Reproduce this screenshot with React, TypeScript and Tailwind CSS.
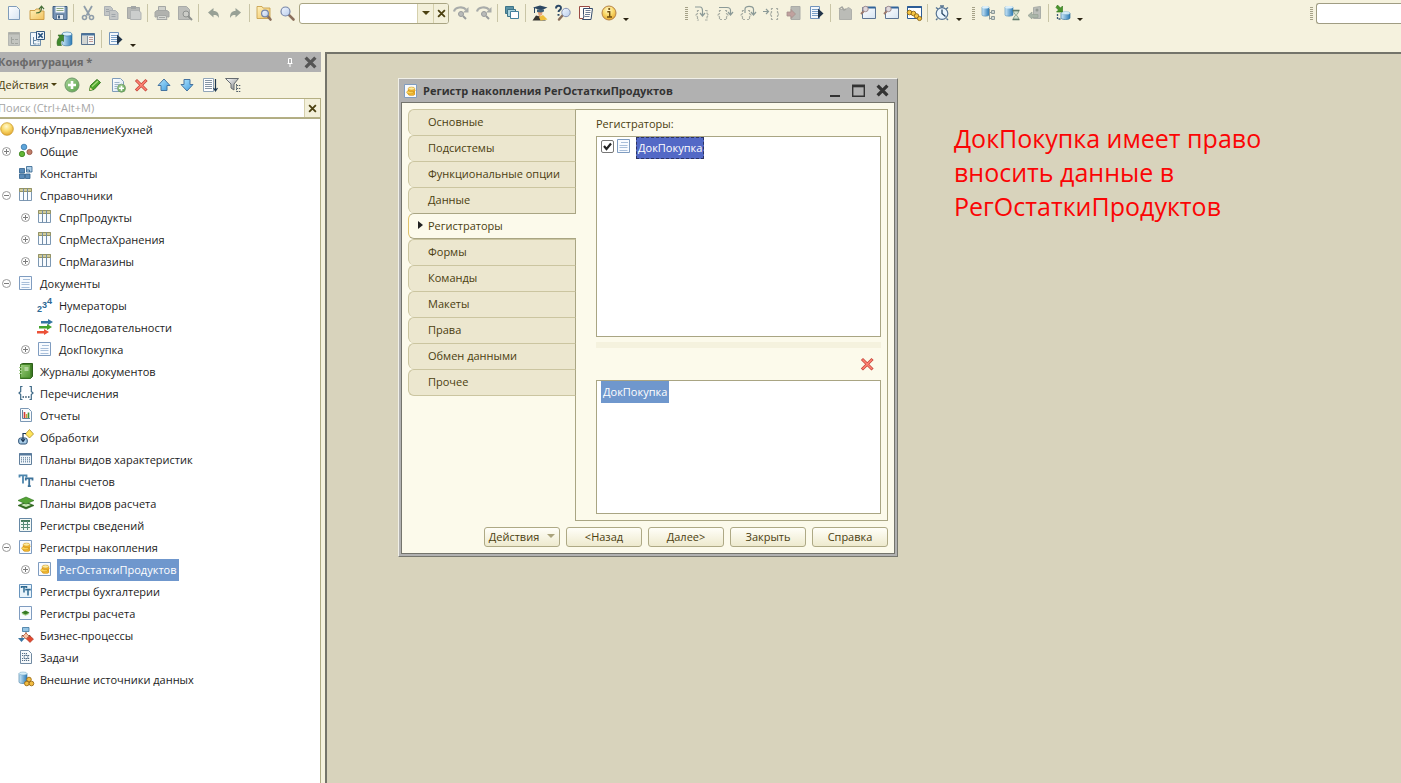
import React from 'react';

type IconName = keyof typeof icons;

const page = (
  <path d="M2.5 1.5h8l3 3v10h-11z" fill="url(#gPaper)" stroke="#7f9cba" />
);
const sheet = <path d="M1.5 1.5h12v13h-12z" fill="#f8fbff" stroke="#7f9cc0" />;
const dots = (x: number, y: number, n: number) =>
  Array.from({ length: n }, (_, i) => <path key={i} d={`M${x + i * 2 + 0.5} ${y}v6`} stroke="#7d96ae" strokeDasharray="1.500 .5" />);

const cylinder = (
  <g stroke="#2f6f9f" strokeWidth=".6">
    <path d="M5 3v10c0 2.400 10 2.400 10 0V3z" fill="url(#gBlue)" />
    <ellipse cx="10" cy="3" rx="5" ry="2" fill="#d8effb" />
  </g>
);

const lens = (x = 6.5, y = 6.5, r = 4.5) => (
  <g>
    <path d={`M${x + r * 0.7} ${y + r * 0.7}L14.5 14.5`} stroke="#8b6f5c" strokeWidth="2.6" strokeLinecap="round" />
    <circle cx={x} cy={y} r={r} fill="url(#gLens)" stroke="#7685a8" strokeWidth="1.2" />
  </g>
);

const coins = (
  <g stroke="#b98218" strokeWidth=".4">
    <path d="M4.500 9v1.800c1 1.600 6.500 1.600 7.500 0V5.500c-1-1.600-6-1.600-7 0z" fill="#e9a71f" strokeWidth="0" />
    <ellipse cx="8.500" cy="11" rx="3.500" ry="1.500" fill="#f3b62c" />
    <ellipse cx="7" cy="9.300" rx="3.500" ry="1.500" fill="#fdd65a" />
    <ellipse cx="9" cy="7.300" rx="3.300" ry="1.500" fill="#f3b62c" />
    <ellipse cx="8.500" cy="5.500" rx="3.300" ry="1.500" fill="#ffeb9a" />
  </g>
);

const tt = (
  <g fill="none" strokeWidth="1.8">
    <path d="M1.5 4.500V2.400h7V4.500M5 2.400V10.500" stroke="#4d86ad" />
    <path d="M7.800 7.500V5.400h6.700V7.500M11.200 5.400V13.500M9.800 13.200h3" stroke="#3d7299" />
  </g>
);

const windowFrame = (
  <g>
    <path d="M2.500 2.500h13v11h-13z" fill="url(#gPaper)" stroke="#5d7594" />
    <path d="M4 2.500h11.500" stroke="#31649b" strokeWidth="2" />
  </g>
);

const icons = {
  newFile: page,
  open: (
    <g>
      <path d="M1 5.500h5l1-1.500h4v2h4v8.500H1z" fill="url(#gFolder)" stroke="#c9973f" strokeWidth=".9" />
      <path d="M7 8c4.500 0 5.500-1.500 5.500-6M10 4.200l2.500-3 2.500 3" fill="none" stroke="#47703a" strokeWidth="1.200" />
    </g>
  ),
  save: (
    <g>
      <path d="M1 1.500h14v13H2.500L1 13z" fill="#7794b5" stroke="#3f5e80" />
      <path d="M3.500 1.500h9v6h-9z" fill="#f5f8fa" />
      <path d="M4.500 3.500h7M4.500 5.500h7" stroke="#8dab80" />
      <path d="M4.500 9.500h7v5h-7z" fill="#dfe7ef" stroke="#48637f" strokeWidth=".7" />
      <path d="M6 10.500h2v3H6z" fill="#3f5e80" />
    </g>
  ),
  cut: (
    <g fill="none" stroke="#8f9da9">
      <path d="M4 1l5.500 9.500M12 1L6.500 10.500" strokeWidth="1.800" />
      <circle cx="4.500" cy="12.500" r="2" strokeWidth="1.600" />
      <circle cx="11.500" cy="12.500" r="2" strokeWidth="1.600" />
    </g>
  ),
  copy: (
    <g fill="#c3c6c6" stroke="#acb1b4">
      <path d="M1.500 1.500h6l2 2v7h-8z" />
      <path d="M6.500 5.500h6l2.500 2.500v6.500H6.500z" />
      <path d="M3 4.500h3M3 6.500h3M8.500 9.500h4M8.500 11.500h4" stroke="#9fa5aa" />
    </g>
  ),
  paste: (
    <g>
      <path d="M1.500 2.500h12v11h-12z" fill="#b7b8b5" stroke="#a6a8a6" />
      <path d="M5 1h5v3H5z" fill="#a2a5a5" />
      <path d="M4.500 5.500h8l2.500 2v7H4.500z" fill="#cccecd" stroke="#b0b3b3" />
    </g>
  ),
  print: (
    <g stroke="#a5a7a4">
      <path d="M4.500 1.500h7v5h-7z" fill="#d0d1cc" />
      <path d="M1 7l2-1.500h10L15 7v5H1z" fill="#b1b2ae" />
      <path d="M4 10.500h8l1 4H3z" fill="#d6d7d2" />
      <path d="M5 12.500h6" />
    </g>
  ),
  preview: (
    <g>
      <path d="M1.500 1.500h8l3 3v10h-11z" fill="#bdbeba" stroke="#a9aba8" />
      <circle cx="9" cy="9" r="3" fill="#cccdc8" stroke="#8f928f" />
      <path d="M11 11l4 4" stroke="#8f928f" strokeWidth="2" />
    </g>
  ),
  undo: <path d="M3 7.500L8.500 3v3c4 0 5.500 2.500 5.500 7-1.500-2.500-2.500-3-5.500-3v2.500z" fill="#98a196" />,
  redo: <path d="M13 7.500L7.500 3v3C3.500 6 2 8.500 2 13c1.500-2.500 2.500-3 5.500-3v2.500z" fill="#98a196" />,
  findFolder: (
    <g>
      <path d="M1 1.500h5l1 1.500h7v10.500H1z" fill="url(#gFolder)" stroke="#c9a24f" strokeWidth=".9" />
      {lens(9, 8.5, 3.4)}
    </g>
  ),
  find: lens(),
  findNext: (
    <g>
      <path d="M1 6.500c1-4.500 9-5.500 12-2" fill="none" stroke="#a9acaa" strokeWidth="2.200" />
      <path d="M10 7.500L15.500 7.500V2z" fill="#a9acaa" />
      <circle cx="8" cy="9" r="2.500" fill="#b9bbb9" stroke="#999c9c" />
      <path d="M10 11l3 3" stroke="#999c9c" strokeWidth="2" />
    </g>
  ),
  windows: (
    <g>
      <path d="M1.500 1.500h8v7h-8z" fill="#5b93a5" stroke="#3d7488" />
      <path d="M3.500 4.500h8v7h-8z" fill="#a9d3dd" stroke="#3d7488" />
      <path d="M6.500 6.500h8v7h-8z" fill="#fff" stroke="#43809b" />
    </g>
  ),
  scholar: (
    <g>
      <path d="M.5 15.500l3.500-5 4 1 6 4z" fill="#36342f" />
      <path d="M7 12l4-2 4.500 4.500-7 1z" fill="#f0bf3a" />
      <path d="M5 5h6l-1 5-3 1.500z" fill="#e8a77c" />
      <path d="M1 2.500L8 .5l7.500 2-6.500 3z" fill="#2c4762" />
      <path d="M5 4.500v2.500l4 .5 3-1V4.500" fill="#3e6079" />
      <path d="M2.500 3v5" stroke="#2c4762" />
    </g>
  ),
  helpFind: (
    <g>
      <path d="M7.500 10.500L4 14.500" stroke="#8b6f5c" strokeWidth="2.500" strokeLinecap="round" />
      <circle cx="11" cy="7.500" r="4.200" fill="url(#gLens)" stroke="#8794b5" />
      <path d="M1 3.500c0-3.500 5-3.500 5-.5 0 2-2.500 2-2.500 4M3.500 9v1.700" fill="none" stroke="#2b4865" strokeWidth="1.900" />
    </g>
  ),
  syntax: (
    <g fill="#fffdf8">
      <path d="M1.500 1.500h10v12h-10z" stroke="#9a4a42" />
      <path d="M5.500 3.500h9l-1.500 11H4.500c1.500-2 1.500-3 1-5z" stroke="#354d6d" />
      <path d="M7.500 5.500h5M7.500 7.500h5M7 9.500h5M6.500 11.500h5" stroke="#6d7f98" />
    </g>
  ),
  info: (
    <g>
      <circle cx="8" cy="8" r="7" fill="url(#gGold)" stroke="#b58348" />
      <path d="M6.300 6.800h2.400v5M6 12h5" stroke="#6f4c0e" strokeWidth="1.400" fill="none" />
      <circle cx="8.200" cy="4" r="1.100" fill="#6f4c0e" />
    </g>
  ),
  stepInto: (
    <g fill="none" stroke="#a9aea4" strokeWidth="1.200">
      <path d="M5 5.500H3.500v3l-1.500 1.500 1.500 2v3H5M11 5.500h2v3l1.500 1.500-1.500 2v3h-2" strokeDasharray="3 1" />
      <path d="M1 2h5c2 0 2.500 1.500 2.500 4v4M6 8l2.500 3L11 8" stroke="#8b9a97" />
    </g>
  ),
  stepOver: (
    <g fill="none" stroke="#a9aea4" strokeWidth="1.200">
      <path d="M4 5.500H2.500v3l-1.500 1.500 1.500 2v2.500H5M8 5.500h1.500v3L11 10l-1.500 2v2.500H7" strokeDasharray="3 1" />
      <path d="M2 2.500h8c2.500 0 3.500 1 3.500 3v4M11 7l2.500 3 2.500-3" stroke="#8b9a97" />
    </g>
  ),
  stepOut: (
    <g fill="none" stroke="#a9aea4" strokeWidth="1.200">
      <path d="M4 5.500H2.500v3L1 10l1.500 2v2.500H5M8 5.500h1.500v3L11 10l-1.500 2v2.500H7" strokeDasharray="3 1" />
      <path d="M5 8V4c0-3.500 8-3.500 8.500 0v5M11 7l2.500 3 2.500-3" stroke="#8b9a97" />
    </g>
  ),
  runTo: (
    <g fill="none" stroke="#a9aea4" strokeWidth="1.200">
      <path d="M10 3.500H8.500v4L7 9l1.500 2v3.500H10M13 3.500h1.500v4L16 9l-1.500 2v3.500H13" strokeDasharray="3 1" />
      <path d="M0 6.500h5M3 4l2.500 2.500L3 9" stroke="#8b9a97" />
    </g>
  ),
  breakpoint: (
    <g>
      <path d="M5 1.500h9v13H5z" fill="#b9bab5" stroke="#abaca8" />
      <path d="M1 7h4V4.500L9.500 9 5 13.500V11H1z" fill="#c0a19e" stroke="#a5908d" strokeWidth=".8" />
    </g>
  ),
  docRun: (
    <g>
      <path d="M1.500 1.500h9v12h-9z" fill="#f4f8fc" stroke="#7193bb" />
      <path d="M3 4.500h6M3 6.500h6M3 8.500h6M3 10.500h6" stroke="#7ba0c7" />
      <path d="M9 3.500l5.500 5L9 13.500z" fill="#22354a" />
    </g>
  ),
  greyDoc: (
    <g>
      <path d="M2.500 4.500h6l3-2 3 2v10h-12z" fill="#bbbcb7" stroke="#afb0ab" />
      <path d="M2 4l3-2 2 3 2-1" stroke="#a4a5a0" strokeWidth="1.500" fill="none" />
    </g>
  ),
  windowFind: (
    <g>
      {windowFrame}
      <path d="M1 9l3-3" stroke="#9b796c" strokeWidth="2" />
      <circle cx="5.500" cy="4" r="2.700" fill="#dfd9dc" stroke="#a28e93" />
    </g>
  ),
  windowChain: (
    <g>
      <path d="M1.500 1.500h14v12h-14z" fill="#fff" stroke="#2d5d96" />
      <path d="M1.500 2h14" stroke="#2d5d96" strokeWidth="2" />
      <g fill="#f6c541" stroke="#8c6516" strokeWidth=".9">
        <circle cx="3.500" cy="7.500" r="2.300" />
        <circle cx="7.500" cy="8.500" r="2.300" />
        <circle cx="10.500" cy="11" r="2.300" />
        <circle cx="13.500" cy="13.500" r="2.100" />
      </g>
    </g>
  ),
  stopwatch: (
    <g fill="none" stroke="#567493">
      <path d="M6 1h4M8 1v2M2 2.500l2 1.500M14 2.500L12 4M3.500 13.500L2 15M12.500 13.500L14 15" strokeWidth="1.400" />
      <circle cx="8" cy="8.500" r="5.800" fill="#eaf5fd" strokeWidth="1.200" />
      <path d="M8 4.500v4l3.500 3" stroke="#294866" strokeWidth="1.300" />
    </g>
  ),
  dbTree: (
    <g>
      <path d="M1 2v8c0 1.500 7 1.500 7 0V2z" fill="url(#gBlue)" stroke="#4a8ab5" strokeWidth=".6" />
      <ellipse cx="4.500" cy="2.300" rx="3.500" ry="1.300" fill="#def1fb" />
      <path d="M8.500 4v10.500M8.500 7.500h3M8.500 13.500h3" stroke="#8c9998" fill="none" />
      <path d="M10.500 5.500h3v3h-3zM10.500 11.500h3v3h-3z" fill="#ced6d2" stroke="#8c9998" />
    </g>
  ),
  dbWait: (
    <g>
      <path d="M1 2v8c0 1.500 8 1.500 8 0V2z" fill="url(#gBlue)" stroke="#4a8ab5" strokeWidth=".6" />
      <ellipse cx="5" cy="2.300" rx="4" ry="1.300" fill="#def1fb" />
      <path d="M8.500 5.500h7M8.500 14.500h7" stroke="#567465" strokeWidth="1.500" />
      <path d="M9.500 6h5c0 3-2 3-2 4s2 1.500 2 4h-5c0-2.500 2-3 2-4s-2-1-2-4z" fill="#cfe0cc" stroke="#6f8c78" strokeWidth=".8" />
    </g>
  ),
  dbGrey: (
    <g>
      <path d="M6.500 2.500l7-1v12h-7z" fill="#bbbeb9" stroke="#a9ada8" />
      <path d="M1 10.500L5 7v2.500h6v3H5V14z" fill="#a9b5a8" stroke="#96a295" strokeWidth=".7" />
      <circle cx="10" cy="5" r="1.500" fill="#949b94" />
    </g>
  ),
  dbImport: (
    <g>
      <path d="M6 8v5c0 2 9 2 9 0V8z" fill="url(#gBlue)" stroke="#37729c" strokeWidth=".7" />
      <ellipse cx="10.500" cy="8" rx="4.500" ry="1.500" fill="#d5edf8" stroke="#6ea2c1" strokeWidth=".4" />
      <path d="M2.500 0l3 3 2-2v6H1.500l2-2L1 2.500z" fill="#49952d" stroke="#2d701a" strokeWidth=".6" />
      <path d="M2.500 9v5h3" stroke="#3c5a76" fill="none" strokeWidth="1.300" strokeDasharray="2 1" />
    </g>
  ),
  greyConfig: (
    <g>
      <path d="M2.500 1.500h11v13h-11z" fill="#c3c5c0" stroke="#b5b7b2" />
      <path d="M2.500 2.500h11" stroke="#aaaca7" strokeWidth="2" />
      <path d="M5.500 6v6.500h2.500M5.500 8.500h2.500M9 8.500h3M9 12.500h3" stroke="#a2a5a0" fill="none" />
    </g>
  ),
  configX: (
    <g>
      <path d="M1.500 1.500h10v13h-10z" fill="#f1f7fb" stroke="#6f8eaa" />
      <path d="M4.500 6v7h3M4.500 9.500h3M8.500 10h2M8.500 13h2" stroke="#698aa6" fill="none" />
      <path d="M7.500.5h8v8h-8z" fill="#edf5fb" stroke="#31567d" />
      <path d="M9.300 2.300l4.400 4.400M13.700 2.300L9.300 6.700" stroke="#24507c" strokeWidth="1.600" />
    </g>
  ),
  dbUpdate: (
    <g>
      {cylinder}
      <path d="M.5 14.500h4c-1.500-2-1-4 .5-5.500l1.500 1.500V4H1l1.500 2C0 8.500-.5 11.500.5 14.500z" fill="#3f8a2c" stroke="#28631b" strokeWidth=".6" />
    </g>
  ),
  listWindow: (
    <g>
      <path d="M1.500 2.500h13v11h-13z" fill="#f2f4f2" stroke="#57718c" />
      <path d="M1.500 3.500h13" stroke="#48729c" strokeWidth="2" />
      <path d="M7.500 5v8" stroke="#8695a3" />
      <path d="M9 6.500h4M9 8.500h4M9 10.500h4" stroke="#c39a94" />
      <path d="M2 5h5v8H2z" fill="#d3d6d3" />
    </g>
  ),
  add: (
    <g>
      <circle cx="8" cy="8" r="7" fill="url(#gGreen)" stroke="#70986a" />
      <path d="M8 4v8M4 8h8" stroke="#fff" strokeWidth="2.600" />
    </g>
  ),
  edit: (
    <g>
      <path d="M2.500 13.500l1-5 6.500-6 3.500 3-6.500 7z" fill="#4ea52a" stroke="#307518" />
      <path d="M5 9.500l6-5.500" stroke="#a5dd7c" strokeWidth="1.400" />
      <path d="M2.500 13.500l.7-3 2.500 2z" fill="#e8d79a" />
    </g>
  ),
  addCopy: (
    <g>
      {page}
      <path d="M4.500 5.500h5M4.500 7.500h5M4.500 9.500h3M4.500 11.500h3" stroke="#9db4ca" />
      <circle cx="11.500" cy="11.200" r="4" fill="url(#gGreen)" stroke="#70986a" strokeWidth=".8" />
      <path d="M11.500 8.800v5M9 11.200h5" stroke="#fff" strokeWidth="1.600" />
    </g>
  ),
  remove: (
    <g strokeLinecap="square">
      <path d="M4 4l8.500 8.500M12.500 4L4 12.500" stroke="#c4453a" strokeWidth="3" />
      <path d="M4 4l8.500 8.500M12.500 4L4 12.500" stroke="#ff8273" strokeWidth="1.500" />
    </g>
  ),
  up: <path d="M8 2l6 6.500h-3v5H5v-5H2z" fill="url(#gSky)" stroke="#4674a0" />,
  down: <path d="M8 14L2 7.500h3v-5h6v5h3z" fill="url(#gSky)" stroke="#4674a0" />,
  sortList: (
    <g>
      <path d="M1.500 1.500h10v13h-10z" fill="#fff" stroke="#91a5b8" />
      <path d="M3 3.500h7M3 5.500h7M3 7.500h7M3 9.500h7M3 11.500h7" stroke="#8595a5" />
      <path d="M13.500 2v11M11.500 11l2 3 2-3" stroke="#1f3850" strokeWidth="1.200" fill="none" />
    </g>
  ),
  filter: (
    <g>
      <path d="M.5 1.500h13L9 7v6l-3-2V7z" fill="url(#gSteel)" stroke="#666c70" />
      <path d="M11.500 7v7.500M11.500 8.500h4M11.500 11.500h4M11.500 14.500h4" stroke="#53606b" strokeDasharray="1.500 .8" />
    </g>
  ),
  root: <circle cx="8" cy="8" r="6.300" fill="url(#gGold)" stroke="#c99a2c" strokeWidth=".8" />,
  common: (
    <g strokeWidth=".8">
      <circle cx="6" cy="4" r="2.800" fill="#5fa5da" stroke="#3677ab" />
      <circle cx="4" cy="11" r="2.700" fill="#62b636" stroke="#39801b" />
      <circle cx="11.500" cy="9" r="2.600" fill="#c17e6a" stroke="#8f5240" />
    </g>
  ),
  constants: (
    <g fill="#5b8bb8" stroke="#2f5f8c" strokeWidth=".8">
      <path d="M1.500 3.500h5v4.500h-5zM1.500 9h5v4.500h-5zM7.500 9h4.500v4.500H7.500z" />
      <path d="M8.500 1.500h5.500v5.500H8.500z" fill="#b1d0e8" />
      <path d="M8.500 5h3v2" fill="none" />
    </g>
  ),
  catalog: (
    <g>
      <path d="M1.500 1.500h12v12h-12z" fill="#f8fbfe" stroke="#7d98b3" />
      <path d="M1.500 1.500h12v3h-12z" fill="#d0cb9a" stroke="#969462" />
      <path d="M5.500 1.500v12M9.500 1.500v12" stroke="#728da7" />
    </g>
  ),
  document: (
    <g>
      {sheet}
      <path d="M5 4.500h7M3.500 7.500h8M3.500 9.500h8M3.500 12.500h8" stroke="#a9bfda" />
    </g>
  ),
  numerators: (
    <g fontFamily="Liberation Sans, sans-serif" fontWeight="700" fill="#2d6994">
      <text x="0" y="15" fontSize="9">2</text>
      <text x="5" y="11" fontSize="9">3</text>
      <text x="10" y="7" fontSize="9">4</text>
    </g>
  ),
  sequences: (
    <g>
      <path d="M4 2h7V0l5 3-5 3V4.500H4z" fill="#3476a2" />
      <path d="M2 7h8V5l5 3-5 3V9.500H2z" fill="#43a42d" />
      <path d="M0 12h7v-2l5 3-5 3v-1.500H0z" fill="#ec5138" />
    </g>
  ),
  journal: (
    <g>
      <path d="M2.500 1.500l2-1h10v13l-2 2h-10z" fill="#3d7a25" stroke="#2d5f1a" />
      <path d="M2.500 1.500h10v13.500h-10z" fill="url(#gGreenBook)" stroke="#458429" />
      <path d="M6.500 5h4M6.500 7h4" stroke="#e7f6dc" strokeWidth="1.200" />
      <path d="M1 4.500h3M1 7.500h3M1 10.500h3" stroke="#a8cf92" />
    </g>
  ),
  enums: (
    <g fill="none" stroke="#3e6987" strokeWidth="1.200">
      <path d="M4.500 1.500H2.700v5L1 8l1.700 1.500v5h1.800M11.500 1.500h1.800v5L15 8l-1.700 1.500v5h-1.800" />
      <path d="M4.500 12H6M7.200 12h1.500M10 12h1.500" strokeWidth="1.500" stroke="#284c67" />
    </g>
  ),
  reports: (
    <g>
      <path d="M2.500 1.500h8l3 3v10h-11z" fill="#f9fbfd" stroke="#7b98b5" />
      <path d="M4.500 3v8.500h7.500" stroke="#628099" fill="none" />
      <path d="M6.500 5v6" stroke="#cf3b3b" strokeWidth="1.600" />
      <path d="M8.500 7v4" stroke="#d69b35" strokeWidth="1.600" />
      <path d="M10.500 5.500v5.500" stroke="#3f923d" strokeWidth="1.600" />
    </g>
  ),
  processing: (
    <g>
      <path d="M7.500 5l4-4.500L15.500 5l-4 4z" fill="#ffe45b" stroke="#a98b22" strokeWidth=".8" />
      <rect x=".7" y="9" width="8.500" height="6" rx="2" fill="#a9cde8" stroke="#294f74" />
      <path d="M8 4.500H5V12M3 10l2 2.500L7 10" stroke="#1c3654" strokeWidth="1.200" fill="none" />
    </g>
  ),
  charPlans: (
    <g>
      <path d="M1.500 2.500h12v11h-12z" fill="#f2f7fb" stroke="#617f9c" />
      <path d="M1 3.500h13" stroke="#56799c" strokeWidth="2" />
      {dots(3, 6, 5)}
    </g>
  ),
  accounts: tt,
  calcPlans: (
    <g strokeWidth=".6">
      <path d="M0 10.500l8-3.500 8 3.500-8 3.500z" fill="#2f6d1c" stroke="#245615" />
      <path d="M3 10l5-2 5 2-5 2z" fill="#c9e5b8" />
      <path d="M0 5.500L8 2l8 3.500L8 9z" fill="#54a436" stroke="#2c701a" />
    </g>
  ),
  infoReg: (
    <g>
      <path d="M1.500 1.500h12v13h-12z" fill="#f3f8f5" stroke="#6688a5" />
      <path d="M3 4h9" stroke="#437b59" strokeWidth="2" />
      <path d="M3 7.500h9M3 10.500h9M5.500 4v9M9.500 4v9" stroke="#5a8d79" />
    </g>
  ),
  accumReg: (
    <g>
      {sheet}
      {coins}
    </g>
  ),
  bookReg: (
    <g>
      <path d="M1.500 1.500h12v13h-12z" fill="#e8f3fa" stroke="#6794bd" />
      <path d="M3.500 5V3.800h5V5M6 4v5.500M8 7.500V6.500h4v1M10 6.500v6" stroke="#2d6991" strokeWidth="1.500" fill="none" />
    </g>
  ),
  calcReg: (
    <g>
      {sheet}
      <path d="M3.500 8.700l4-2 4 2-4 2z" fill="#9bcb82" />
      <path d="M3.500 7.500l4-2 4 2-4 2z" fill="#377b24" />
    </g>
  ),
  process: (
    <g>
      <path d="M8 5v3M4 12V8.500h8V11" stroke="#765243" fill="none" />
      <path d="M4.500.5h6.500v4H4.500z" fill="#95c5e5" stroke="#3b739c" strokeWidth=".8" />
      <path d="M8 6l3 3-3 3-3-3z" fill="#f3c3a5" stroke="#c35e3b" strokeWidth=".8" />
      <path d="M0 11h7l-3.500 4z" fill="#3876a3" />
      <path d="M12 9l3.500 3-3.500 3.500L8.500 12z" fill="#e2482f" stroke="#a52f1d" strokeWidth=".6" />
    </g>
  ),
  tasks: (
    <g>
      <path d="M2.500 1.500h8l3 3v10h-11z" fill="#f7fafc" stroke="#718aa2" />
      <path d="M4 4.500h5M4 6.500h8M4 9.500h8M4 11.500h8" stroke="#536b84" strokeDasharray="1.200 .8" />
      <circle cx="8" cy="8" r="2" fill="none" stroke="#657d94" strokeWidth=".8" />
    </g>
  ),
  external: (
    <g>
      <path d="M1 2.500v8.500c0 2 8 2 8 0V2.500z" fill="url(#gBlue)" stroke="#37729c" strokeWidth=".6" />
      <ellipse cx="5" cy="2.500" rx="4" ry="1.500" fill="#d5edf8" stroke="#6ea2c1" strokeWidth=".5" />
      <g fill="#f2bd42" stroke="#9b6a13" strokeWidth=".9">
        <circle cx="11" cy="8.500" r="2.300" />
        <circle cx="8.800" cy="12.500" r="2.300" />
        <circle cx="13.500" cy="12.500" r="2.300" />
      </g>
    </g>
  ),
};

function Icon({ name }: { name: IconName }) {
  return (
    <svg viewBox="0 0 16 16" className="size-4 shrink-0 overflow-visible" aria-hidden="true">
      {icons[name]}
    </svg>
  );
}

function stops(id: string, from: string, to: string) {
  return (
    <linearGradient id={id} x1="0" y1="0" x2="1" y2="1">
      <stop offset="0" stopColor={from} />
      <stop offset="1" stopColor={to} />
    </linearGradient>
  );
}

function Gradients() {
  return (
    <svg width="0" height="0" className="absolute" aria-hidden="true">
      <defs>
        {stops('gPaper', '#ffffff', '#d6e4f2')}
        {stops('gFolder', '#fff2bd', '#f2c25c')}
        {stops('gLens', '#f2f7ff', '#b9cdeb')}
        {stops('gGreen', '#a7d398', '#5aa34b')}
        {stops('gGreenBook', '#9ccf7c', '#4d932f')}
        {stops('gSky', '#b5e7ff', '#3c9ade')}
        {stops('gSteel', '#ffffff', '#7c8184')}
        <linearGradient id="gBlue">
          <stop offset="0" stopColor="#cfeafa" />
          <stop offset="1" stopColor="#2c7ab5" />
        </linearGradient>
        <radialGradient id="gGold" cx=".45" cy=".3" r=".7">
          <stop offset="0" stopColor="#fff8d0" />
          <stop offset=".5" stopColor="#fadb6c" />
          <stop offset="1" stopColor="#e5a832" />
        </radialGradient>
      </defs>
    </svg>
  );
}

function Tool({ name, label }: { name: IconName; label: string }) {
  return (
    <button type="button" aria-label={label} className="flex h-6 w-[23px] shrink-0 items-center justify-center">
      <Icon name={name} />
    </button>
  );
}

const Sep = () => (
  <span className="flex h-[18px] w-[5px] shrink-0 justify-center">
    <span className="w-px bg-[#c9c5a6]" />
  </span>
);

const Grip = () => (
  <span className="flex w-2 shrink-0 flex-col items-center gap-px">
    {[0, 1, 2, 3, 4, 5, 6].map((i) => (
      <span key={i} className="h-px w-[3px] bg-[#a5a187]" />
    ))}
  </span>
);

const Caret = ({ className = '' }: { className?: string }) => (
  <svg viewBox="0 0 8 4" className={`h-1 w-2 ${className}`} aria-hidden="true">
    <path d="M0 0h8L4 4z" fill="currentColor" />
  </svg>
);

const SmallCaret = () => (
  <svg viewBox="0 0 6 3" className="h-[3px] w-1.5 shrink-0" aria-hidden="true">
    <path d="M0 0h6L3 3z" fill="currentColor" />
  </svg>
);

const More = ({ label }: { label: string }) => (
  <button type="button" aria-label={label} className="flex h-6 w-3 shrink-0 items-end justify-center pb-1 text-[#2b2413]">
    <SmallCaret />
  </button>
);

const Cross = ({ size, width = 2.4 }: { size: string; width?: number }) => (
  <svg viewBox="0 0 12 12" className={size} aria-hidden="true">
    <path d="M1.500 1.500l9 9M10.500 1.500l-9 9" stroke="currentColor" strokeWidth={width} fill="none" />
  </svg>
);

function MainToolbars() {
  return (
    <header className="h-[52px] shrink-0 overflow-hidden">
      <div className="flex h-[26px] items-center pl-0.5">
        <Tool name="newFile" label="Новый" />
        <Tool name="open" label="Открыть" />
        <Tool name="save" label="Сохранить" />
        <Sep />
        <Tool name="cut" label="Вырезать" />
        <Tool name="copy" label="Копировать" />
        <Tool name="paste" label="Вставить" />
        <Sep />
        <Tool name="print" label="Печать" />
        <Tool name="preview" label="Предварительный просмотр" />
        <Sep />
        <Tool name="undo" label="Отменить" />
        <Tool name="redo" label="Повторить" />
        <Sep />
        <Tool name="findFolder" label="Глобальный поиск" />
        <Tool name="find" label="Найти" />
        <div className="ml-px flex h-[21px] w-[150px] shrink-0 overflow-hidden rounded-[3px] border border-[#a9a583] bg-white text-[#4b4010]">
          <input aria-label="Строка поиска" className="min-w-0 flex-1 px-1 text-[11px] outline-none" />
          <button type="button" aria-label="Список" className="flex w-4 items-center justify-center border-l border-[#d5d0ac] bg-[#f3f0da]">
            <Caret />
          </button>
          <button type="button" aria-label="Очистить" className="flex w-[15px] items-center justify-center border-l border-[#d5d0ac] bg-[#f3f0da]">
            <Cross size="size-[9px]" />
          </button>
        </div>
        <Tool name="findNext" label="Найти далее" />
        <Tool name="findNext" label="Найти ранее" />
        <Sep />
        <Tool name="windows" label="Окна" />
        <Sep />
        <Tool name="scholar" label="Помощник" />
        <Tool name="helpFind" label="Поиск в справке" />
        <Tool name="syntax" label="Синтакс" />
        <Tool name="info" label="О программе" />
        <More label="Ещё" />
        <div className="w-[50px] shrink-0" />
        <Grip />
        <Tool name="stepInto" label="Шагнуть в" />
        <Tool name="stepOver" label="Шагнуть через" />
        <Tool name="stepOut" label="Шагнуть из" />
        <Tool name="runTo" label="Идти до курсора" />
        <Tool name="breakpoint" label="Точка останова" />
        <Tool name="docRun" label="Запуск" />
        <Sep />
        <Tool name="greyDoc" label="Стек вызовов" />
        <Tool name="windowFind" label="Табло" />
        <Tool name="windowFind" label="Вычислить" />
        <Tool name="windowChain" label="Предметы отладки" />
        <Sep />
        <Tool name="stopwatch" label="Замер производительности" />
        <More label="Ещё" />
        <div className="w-1 shrink-0" />
        <Grip />
        <Tool name="dbTree" label="Хранилище" />
        <Tool name="dbWait" label="Сравнить" />
        <Tool name="dbGrey" label="Захватить" />
        <Sep />
        <Tool name="dbImport" label="Загрузить" />
        <More label="Ещё" />
        <div className="flex-1" />
        <Grip />
        <input aria-label="Процедуры" className="ml-px h-[21px] w-[85px] shrink-0 rounded-l-[3px] border border-r-0 border-[#a09d83] bg-white px-1 text-[11px] outline-none" />
      </div>
      <div className="flex h-[26px] items-center pl-0.5">
        <Tool name="greyConfig" label="Открыть конфигурацию" />
        <Tool name="configX" label="Закрыть конфигурацию" />
        <Sep />
        <Tool name="dbUpdate" label="Обновить базу данных" />
        <Tool name="listWindow" label="Окно конфигурации" />
        <Sep />
        <Tool name="docRun" label="Отладка" />
        <More label="Ещё" />
      </div>
    </header>
  );
}

interface Node {
  text: string;
  icon: IconName;
  open?: boolean;
  closed?: boolean;
  selected?: boolean;
  children?: Node[];
}

const tree: Node[] = [
  { text: 'Общие', icon: 'common', closed: true },
  { text: 'Константы', icon: 'constants' },
  {
    text: 'Справочники',
    icon: 'catalog',
    open: true,
    children: [
      { text: 'СпрПродукты', icon: 'catalog', closed: true },
      { text: 'СпрМестаХранения', icon: 'catalog', closed: true },
      { text: 'СпрМагазины', icon: 'catalog', closed: true },
    ],
  },
  {
    text: 'Документы',
    icon: 'document',
    open: true,
    children: [
      { text: 'Нумераторы', icon: 'numerators' },
      { text: 'Последовательности', icon: 'sequences' },
      { text: 'ДокПокупка', icon: 'document', closed: true },
    ],
  },
  { text: 'Журналы документов', icon: 'journal' },
  { text: 'Перечисления', icon: 'enums' },
  { text: 'Отчеты', icon: 'reports' },
  { text: 'Обработки', icon: 'processing' },
  { text: 'Планы видов характеристик', icon: 'charPlans' },
  { text: 'Планы счетов', icon: 'accounts' },
  { text: 'Планы видов расчета', icon: 'calcPlans' },
  { text: 'Регистры сведений', icon: 'infoReg' },
  {
    text: 'Регистры накопления',
    icon: 'accumReg',
    open: true,
    children: [{ text: 'РегОстаткиПродуктов', icon: 'accumReg', closed: true, selected: true }],
  },
  { text: 'Регистры бухгалтерии', icon: 'bookReg' },
  { text: 'Регистры расчета', icon: 'calcReg' },
  { text: 'Бизнес-процессы', icon: 'process' },
  { text: 'Задачи', icon: 'tasks' },
  { text: 'Внешние источники данных', icon: 'external' },
];

function Toggle({ open }: { open: boolean }) {
  return (
    <button type="button" aria-label={open ? 'Свернуть' : 'Развернуть'} className="block">
      <svg viewBox="0 0 13 13" className="size-[13px]" fill="none" stroke="#9a9a9a" aria-hidden="true">
        <circle cx="6.500" cy="6.500" r="4" />
        <path d={open ? 'M4 6.500h5' : 'M4 6.500h5M6.500 4v5'} stroke="#7c7c7c" />
      </svg>
    </button>
  );
}

function TreeItem({ node }: { node: Node }) {
  return (
    <li role="treeitem" aria-selected={!!node.selected}>
      <div className="flex h-[22px] items-center">
        <span className="mr-[5px] w-[13px] shrink-0 pb-0.5">{(node.open || node.closed) && <Toggle open={!!node.open} />}</span>
        <span className="pb-0.5">
          <Icon name={node.icon} />
        </span>
        <span
          className={
            node.selected
              ? 'ml-1 bg-[#6f97cd] px-0.5 leading-[22px] whitespace-nowrap text-white'
              : 'ml-1 px-0.5 leading-[22px] whitespace-nowrap'
          }
        >
          {node.text}
        </span>
      </div>
      {node.children && (
        <ul role="group" className="pl-[19px]">
          {node.children.map((c) => (
            <TreeItem key={c.text} node={c} />
          ))}
        </ul>
      )}
    </li>
  );
}

function ConfigPanel() {
  return (
    <aside className="flex w-[321px] shrink-0 flex-col overflow-hidden">
      <div className="flex h-5 items-center bg-[#b1b1b1] pr-1 text-[#6a6a6a]">
        <h2 className="-ml-0.5 flex-1 pb-0.5 font-bold">Конфигурация *</h2>
        <button type="button" aria-label="Закрепить" className="mr-2.5">
          <svg viewBox="0 0 8 10" className="h-2.5 w-2" fill="none" stroke="#fff" aria-hidden="true">
            <path d="M2.500 6V1.500h3V6M1.500 6.500h5M4 7v3" />
          </svg>
        </button>
        <button type="button" aria-label="Закрыть панель" className="text-[#555]">
          <Cross size="size-[13px]" width={3} />
        </button>
      </div>
      <div className="flex h-[26px] items-center">
        <button type="button" className="-ml-0.5 flex w-[62px] items-center gap-0.5 pb-0.5 whitespace-nowrap text-[#4b4010]">
          Действия
          <SmallCaret />
        </button>
        <Tool name="add" label="Добавить" />
        <Tool name="edit" label="Изменить" />
        <Tool name="addCopy" label="Добавить копированием" />
        <Tool name="remove" label="Удалить" />
        <Tool name="up" label="Вверх" />
        <Tool name="down" label="Вниз" />
        <Tool name="sortList" label="Упорядочить" />
        <Tool name="filter" label="Отбор" />
      </div>
      <div className="flex h-5 shrink-0 border-y border-r border-[#b5b084] bg-white">
        <input aria-label="Поиск" placeholder="Поиск (Ctrl+Alt+M)" className="-ml-0.5 min-w-0 flex-1 pb-0.5 outline-none placeholder:text-[#a6a6a6]" />
        <button type="button" aria-label="Очистить поиск" className="flex w-4 items-center justify-center border-l border-[#d5d0ac] bg-[#f3f0da] text-[#4b4010]">
          <Cross size="size-[9px]" />
        </button>
      </div>
      <ul role="tree" className="flex-1 overflow-hidden border-t border-r border-[#b0ac84] bg-white text-[#1c1c1c]">
        <li role="treeitem" aria-selected="false" className="flex h-[22px] items-center">
          <span className="-ml-px pb-0.5">
            <Icon name="root" />
          </span>
          <span className="ml-1 px-0.5 leading-[22px]">КонфУправлениеКухней</span>
        </li>
        {tree.map((n) => (
          <TreeItem key={n.text} node={n} />
        ))}
      </ul>
    </aside>
  );
}

const tabs = [
  'Основные',
  'Подсистемы',
  'Функциональные опции',
  'Данные',
  'Регистраторы',
  'Формы',
  'Команды',
  'Макеты',
  'Права',
  'Обмен данными',
  'Прочее',
];

const ACTIVE = 'Регистраторы';

const dialogButton =
  'flex h-5 w-[76px] items-center justify-center rounded-[3px] border border-[#aea985] bg-linear-to-b from-[#fffef8] to-[#eeeace] pb-0.5';

function RegisterWindow() {
  return (
    <section
      aria-label="Регистр накопления"
      className="absolute top-[24px] left-[71px] flex w-[500px] flex-col border border-t-[#f0efe8] border-r-[#77776f] border-b-[#77776f] border-l-[#f0efe8] bg-[#b1b1b1] px-0.5 pb-0.5 text-[#4b4010]"
    >
      <div className="flex h-[23px] items-center pr-1.5 pl-0.5 text-[#333]">
        <Icon name="accumReg" />
        <h1 className="ml-1 flex-1 font-bold">Регистр накопления РегОстаткиПродуктов</h1>
        <button type="button" aria-label="Свернуть" className="mr-[11px]">
          <svg viewBox="0 0 12 12" className="size-3" aria-hidden="true">
            <path d="M1 11h10" stroke="currentColor" strokeWidth="2" />
          </svg>
        </button>
        <button type="button" aria-label="Развернуть" className="mr-[11px]">
          <svg viewBox="0 0 13 13" className="size-[13px]" fill="none" aria-hidden="true">
            <path d="M.7 1.500h11.600v10.800H.7z" stroke="currentColor" strokeWidth="1.400" />
            <path d="M0 2h13" stroke="currentColor" strokeWidth="2.600" />
          </svg>
        </button>
        <button type="button" aria-label="Закрыть">
          <Cross size="size-[13px]" width={3} />
        </button>
      </div>
      <div className="border border-[#74746c] bg-[#fcfaeb] px-1.5 pt-1.5 pb-1.5">
        <div className="flex h-[412px]">
          <nav role="tablist" className="z-10 -mr-px flex w-[168px] shrink-0 flex-col">
            {tabs.map((t) => (
              <button
                key={t}
                type="button"
                role="tab"
                aria-selected={t === ACTIVE}
                className={
                  t === ACTIVE
                    ? 'relative flex h-[26px] items-center rounded-l-md border-y border-l border-t-[#a9a583] border-b-[#a9a583] border-l-[#e0c36c] bg-[#fcfaeb] pb-0.5 pl-[19px] whitespace-nowrap'
                    : 'flex h-[26px] items-center rounded-l-md border-t border-r border-l border-t-[#cbc5a0] border-r-[#a9a583] border-l-[#cbc5a0] bg-[#ece7cf] pb-0.5 pl-[19px] whitespace-nowrap last:h-[27px] last:border-b last:border-b-[#cbc5a0]'
                }
              >
                {t === ACTIVE && (
                  <svg viewBox="0 0 5 8" className="absolute left-[9px] h-2 w-[5px]" aria-hidden="true">
                    <path d="M0 0l5 4-5 4z" fill="#222" />
                  </svg>
                )}
                {t}
              </button>
            ))}
          </nav>
          <div className="flex min-w-0 flex-1 flex-col border border-[#a9a583] pr-1.5 pb-1.5 pl-5">
            <span id="registrars" className="flex h-[26px] items-center">
              Регистраторы:
            </span>
            <ul aria-labelledby="registrars" className="h-[201px] border border-[#a9a583] bg-white pl-1">
              <li>
                <label className="flex h-[22px] items-center">
                  <input type="checkbox" defaultChecked className="peer sr-only" />
                  <span className="mb-1 flex size-[13px] items-center justify-center rounded-[2px] border border-[#777] bg-white">
                    <svg viewBox="0 0 9 9" className="size-[9px]" fill="none" aria-hidden="true">
                      <path d="M1 4l2.500 3L8 1.500" stroke="#222" strokeWidth="2.200" />
                    </svg>
                  </span>
                  <span className="mb-1 ml-0.5">
                    <Icon name="document" />
                  </span>
                  <span className="ml-1 border border-dashed border-[#2d3463] bg-[#5369c6] px-px leading-5 text-white">ДокПокупка</span>
                </label>
              </li>
            </ul>
            <div className="mt-[5px] h-1.5 bg-[#f5f2de]" />
            <div className="flex h-8 items-center justify-end pr-1.5">
              <button type="button" aria-label="Удалить регистратор">
                <Icon name="remove" />
              </button>
            </div>
            <ul aria-label="Выбранные регистраторы" className="flex-1 border border-[#a9a583] bg-white pl-1">
              <li className="flex h-[22px]">
                <span className="bg-[#6f97cd] px-0.5 leading-[22px] text-white">ДокПокупка</span>
              </li>
            </ul>
          </div>
        </div>
        <div className="mt-1.5 flex justify-end gap-1.5">
          <button type="button" className={dialogButton}>
            <span className="mr-2">Действия</span>
            <Caret className="text-[#aaa37c]" />
          </button>
          <button type="button" className={dialogButton}>
            &lt;Назад
          </button>
          <button type="button" className={dialogButton}>
            Далее&gt;
          </button>
          <button type="button" className={dialogButton}>
            Закрыть
          </button>
          <button type="button" className={dialogButton}>
            Справка
          </button>
        </div>
      </div>
    </section>
  );
}

export default function App() {
  return (
    <div className="flex h-screen flex-col overflow-hidden bg-[#f5f2de] font-['Open_Sans','Noto_Sans',sans-serif] text-[11px] leading-[15px]">
      <Gradients />
      <MainToolbars />
      <div className="flex min-h-0 flex-1">
        <ConfigPanel />
        <main className="relative ml-1 flex-1 overflow-hidden border-t-2 border-l-2 border-[#74746a] bg-[#d8d3bc]">
          <RegisterWindow />
          <p className="absolute top-[67px] left-[627px] w-[340px] text-[25px] leading-[34px] text-[#fb0505]">
            ДокПокупка имеет право вносить данные в РегОстаткиПродуктов
          </p>
        </main>
      </div>
    </div>
  );
}
